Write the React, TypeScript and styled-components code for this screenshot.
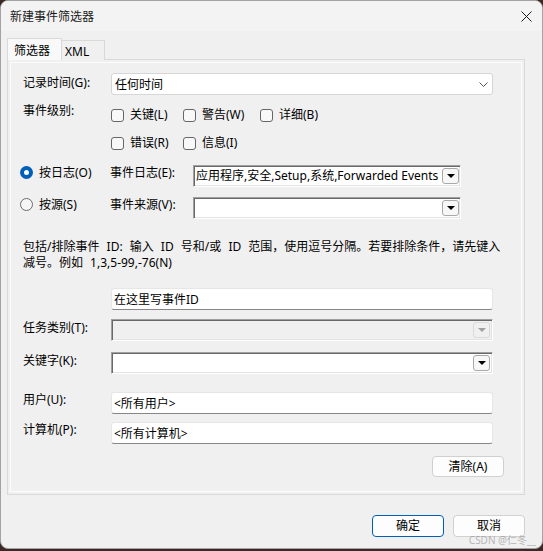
import React from "react";
import styled, { createGlobalStyle } from "styled-components";

const GlobalStyle = createGlobalStyle`
  html, body { margin: 0; padding: 0; background: #3a2926; }
  body {
    font-family: "Noto Sans", "Noto Sans CJK SC", sans-serif;
    font-size: 12px;
    color: #000;
    text-spacing-trim: space-all;
  }
  * { box-sizing: border-box; }
`;

const Window = styled.div`
  position: relative;
  width: 543px;
  height: 549px;
  background: #f0f0f0;
  border: 1px solid #a3a3a3;
  border-radius: 8px;
  overflow: hidden;
  display: flex;
  flex-direction: column;
`;

const TitleBar = styled.div`
  height: 30px;
  flex: none;
  display: flex;
  align-items: center;
  justify-content: space-between;
  padding: 0 10px 0 9px;
  background: #f3f3f3;
  color: #1a1a1a;
  font-size: 12px;
`;

const Body = styled.div`
  display: flex;
  flex-direction: column;
  padding: 7px 0 0 6px;
`;

const TabStrip = styled.div`
  display: flex;
  align-items: flex-end;
  height: 22px;
`;

const Tab = styled.div<{ $active?: boolean }>`
  position: relative;
  z-index: ${(p) => (p.$active ? 1 : 0)};
  width: ${(p) => (p.$active ? 55 : 43)}px;
  height: ${(p) => (p.$active ? 22 : 20)}px;
  display: flex;
  align-items: center;
  padding-left: ${(p) => (p.$active ? 6 : 3)}px;
  padding-top: ${(p) => (p.$active ? 0 : 1)}px;
  background: ${(p) => (p.$active ? "#f9f9f9" : "#f0f0f0")};
  border: 1px solid #d9d9d9;
  border-left: ${(p) => (p.$active ? "1px solid #d9d9d9" : "none")};
  border-bottom: none;
  font-size: 12px;
  white-space: nowrap;
`;

const Panel = styled.div`
  width: 518px;
  height: 436px;
  margin-top: -1px;
  border: 1px solid #d9d9d9;
  padding: 2px;
  background: #f0f0f0;
`;

const PanelInner = styled.div`
  height: 100%;
  border: 1px solid #fcfcfc;
  padding: 10px 17px 0 12px;
  display: flex;
  flex-direction: column;
`;

const FieldRow = styled.div<{ $mt: number }>`
  display: flex;
  align-items: flex-start;
  margin-top: ${(p) => p.$mt}px;
`;

const FieldLabel = styled.div<{ $pt?: number }>`
  width: 88px;
  flex: none;
  line-height: 16px;
  padding-top: ${(p) => p.$pt ?? 0}px;
  white-space: nowrap;
`;

const Select = styled.div`
  width: 382px;
  height: 22px;
  background: #fff;
  border: 1px solid #d6d6d6;
  border-radius: 3px;
  padding: 0 4px 0 3px;
  display: flex;
  align-items: center;
  justify-content: space-between;
  white-space: nowrap;
`;

const CheckGrid = styled.div`
  display: grid;
  grid-template-columns: 72px 77px auto;
  grid-auto-rows: 16px;
  row-gap: 12px;
  padding-top: 4px;
`;

const CheckItem = styled.label`
  display: flex;
  align-items: center;
  gap: 6px;
  line-height: 16px;
  white-space: nowrap;
`;

const CheckBox = styled.span`
  width: 13px;
  height: 13px;
  flex: none;
  border: 1px solid #666;
  border-radius: 3px;
  background: #f8f8f8;
`;

const RadioSection = styled.div`
  display: flex;
  flex-direction: column;
  gap: 10px;
  margin: 14px 0 0 -3px;
`;

const RadioRow = styled.div`
  display: flex;
  align-items: flex-start;
  height: 22px;
`;

const RadioCell = styled.label`
  width: 90px;
  flex: none;
  display: flex;
  align-items: flex-start;
  gap: 6px;
  line-height: 16px;
  white-space: nowrap;
`;

const Radio = styled.span<{ $checked?: boolean }>`
  position: relative;
  width: 13px;
  height: 13px;
  margin-top: 1px;
  flex: none;
  border-radius: 50%;
  background: ${(p) => (p.$checked ? "#005fb8" : "#f6f6f6")};
  border: ${(p) => (p.$checked ? "none" : "1px solid #6b6b6b")};
  &::after {
    content: "";
    display: ${(p) => (p.$checked ? "block" : "none")};
    position: absolute;
    left: 4px;
    top: 4px;
    width: 5px;
    height: 5px;
    border-radius: 50%;
    background: #fff;
  }
`;

const SubLabel = styled.div`
  width: 83px;
  flex: none;
  line-height: 16px;
  white-space: nowrap;
`;

const Combo = styled.div<{ $width: number; $disabled?: boolean }>`
  width: ${(p) => p.$width}px;
  height: 22px;
  flex: none;
  display: flex;
  align-items: center;
  justify-content: space-between;
  padding-left: 1px;
  background: ${(p) => (p.$disabled ? "#f0f0f0" : "#fff")};
  border-top: 1px solid #a0a0a0;
  border-left: 1px solid #a0a0a0;
  border-bottom: 1px solid #fff;
  border-right: 1px solid #fff;
  box-shadow: inset 1px 1px 0 #696969, inset -1px -1px 0 #e3e3e3;
  white-space: nowrap;
  overflow: hidden;
`;

const ComboText = styled.span`
  flex: 1;
  padding-left: 1px;
  overflow: hidden;
  line-height: 16px;
`;

const DropButton = styled.span<{ $disabled?: boolean; $mr: number }>`
  width: 17px;
  height: 16px;
  flex: none;
  margin-right: ${(p) => p.$mr}px;
  display: flex;
  align-items: center;
  justify-content: center;
  border: 1px solid ${(p) => (p.$disabled ? "#dadada" : "#a8a8a8")};
  border-radius: 3px;
  background: ${(p) => (p.$disabled ? "#f0f0f0" : "#f7f7f7")};
`;

const Description = styled.div`
  margin-top: 20px;
  line-height: 16px;
  word-spacing: 4px;
  white-space: nowrap;
`;

const TextBox = styled.div`
  width: 382px;
  height: 22px;
  flex: none;
  display: flex;
  align-items: center;
  padding-left: 2px;
  background: #fff;
  border: 1px solid #e6e6e6;
  border-bottom: 1px solid #878787;
  border-radius: 3px;
  white-space: nowrap;
`;

const ButtonRow = styled.div`
  display: flex;
  justify-content: flex-end;
  margin-top: 12px;
`;

const PushButton = styled.button<{ $primary?: boolean; $height: number }>`
  width: 72px;
  height: ${(p) => p.$height}px;
  padding: 0;
  font-family: "Noto Sans", "Noto Sans CJK SC", sans-serif;
  font-size: 12px;
  color: #000;
  background: #fdfdfd;
  border: 1px solid ${(p) => (p.$primary ? "#005fb8" : "#d0d0d0")};
  border-radius: 4px;
  line-height: 16px;
`;

const Footer = styled.div`
  display: flex;
  justify-content: flex-end;
  gap: 9px;
  padding: 20px 17px 0 0;
`;

const Watermark = styled.div`
  position: absolute;
  right: 6px;
  bottom: 2px;
  font-size: 10px;
  line-height: 12px;
  color: rgba(140, 140, 140, 0.6);
  white-space: nowrap;
`;

const Chevron = () => (
  <svg width="9" height="5" viewBox="0 0 9 5">
    <polyline points="0.5,0.5 4.5,4.5 8.5,0.5" fill="none" stroke="#555" strokeWidth="1" />
  </svg>
);

const Triangle = ({ color }: { color: string }) => (
  <svg width="8" height="4" viewBox="0 0 8 4">
    <polygon points="0,0 8,0 4,4" fill={color} />
  </svg>
);

const CloseIcon = () => (
  <svg width="11" height="11" viewBox="0 0 11 11">
    <path d="M0.5 0.5 L10.5 10.5 M10.5 0.5 L0.5 10.5" stroke="#1a1a1a" strokeWidth="1" fill="none" />
  </svg>
);

export default function App() {
  return (
    <>
      <GlobalStyle />
      <Window>
        <TitleBar>
          <span>新建事件筛选器</span>
          <CloseIcon />
        </TitleBar>
        <Body>
          <TabStrip>
            <Tab $active>筛选器</Tab>
            <Tab>XML</Tab>
          </TabStrip>
          <Panel>
            <PanelInner>
              <FieldRow $mt={0}>
                <FieldLabel $pt={2}>记录时间(G):</FieldLabel>
                <Select>
                  <span>任何时间</span>
                  <Chevron />
                </Select>
              </FieldRow>

              <FieldRow $mt={8}>
                <FieldLabel>事件级别:</FieldLabel>
                <CheckGrid>
                  <CheckItem><CheckBox />关键(L)</CheckItem>
                  <CheckItem><CheckBox />警告(W)</CheckItem>
                  <CheckItem><CheckBox />详细(B)</CheckItem>
                  <CheckItem><CheckBox />错误(R)</CheckItem>
                  <CheckItem><CheckBox />信息(I)</CheckItem>
                </CheckGrid>
              </FieldRow>

              <RadioSection>
                <RadioRow>
                  <RadioCell><Radio $checked />按日志(O)</RadioCell>
                  <SubLabel>事件日志(E):</SubLabel>
                  <Combo $width={268}>
                    <ComboText>应用程序,安全,Setup,系统,Forwarded Events</ComboText>
                    <DropButton $mr={1}><Triangle color="#000" /></DropButton>
                  </Combo>
                </RadioRow>
                <RadioRow>
                  <RadioCell><Radio />按源(S)</RadioCell>
                  <SubLabel>事件来源(V):</SubLabel>
                  <Combo $width={268}>
                    <ComboText />
                    <DropButton $mr={1}><Triangle color="#000" /></DropButton>
                  </Combo>
                </RadioRow>
              </RadioSection>

              <Description>
                包括/排除事件 ID: 输入 ID 号和/或 ID 范围，使用逗号分隔。若要排除条件，请先键入
                <br />
                减号。例如 1,3,5-99,-76(N)
              </Description>

              <FieldRow $mt={17}>
                <FieldLabel />
                <TextBox>在这里写事件ID</TextBox>
              </FieldRow>

              <FieldRow $mt={9}>
                <FieldLabel $pt={1}>任务类别(T):</FieldLabel>
                <Combo $width={382} $disabled>
                  <ComboText />
                  <DropButton $disabled $mr={2}><Triangle color="#a0a0a0" /></DropButton>
                </Combo>
              </FieldRow>

              <FieldRow $mt={11}>
                <FieldLabel $pt={1}>关键字(K):</FieldLabel>
                <Combo $width={382}>
                  <ComboText />
                  <DropButton $mr={2}><Triangle color="#000" /></DropButton>
                </Combo>
              </FieldRow>

              <FieldRow $mt={18}>
                <FieldLabel>用户(U):</FieldLabel>
                <TextBox>&lt;所有用户&gt;</TextBox>
              </FieldRow>

              <FieldRow $mt={8}>
                <FieldLabel>计算机(P):</FieldLabel>
                <TextBox>&lt;所有计算机&gt;</TextBox>
              </FieldRow>

              <ButtonRow>
                <PushButton $height={21}>清除(A)</PushButton>
              </ButtonRow>
            </PanelInner>
          </Panel>
          <Footer>
            <PushButton $primary $height={22}>确定</PushButton>
            <PushButton $height={22}>取消</PushButton>
          </Footer>
        </Body>
        <Watermark>CSDN @仁冬__</Watermark>
      </Window>
    </>
  );
}
